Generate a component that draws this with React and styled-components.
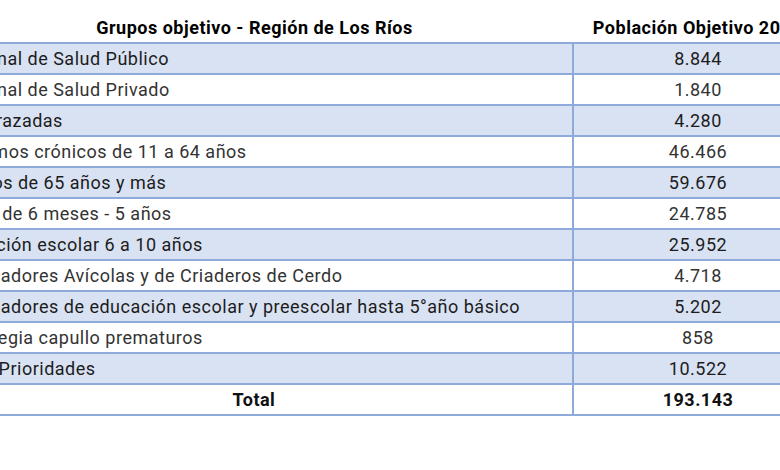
import React from "react";
import styled, { createGlobalStyle } from "styled-components";

const Global = createGlobalStyle`
  html, body { margin: 0; padding: 0; background: #fff; }
  body { font-family: Roboto, "Liberation Sans", sans-serif; }
`;

const Viewport = styled.div`
  width: 780px;
  height: 470px;
  overflow: hidden;
  background: #fff;
  padding-top: 13px;
  box-sizing: border-box;
`;

const Table = styled.table`
  border-collapse: collapse;
  margin-left: -64px;
  table-layout: fixed;
  width: 886px;
  font-family: Roboto, "Liberation Sans", sans-serif;
  letter-spacing: 0.5px;
`;

const HeadCell = styled.th`
  font-size: 18px;
  font-weight: 700;
  color: #000;
  text-align: center;
  height: 29px;
  padding: 0 6px;
  border-bottom: 2px solid #8eaadb;
  background: #fff;
  white-space: nowrap;
`;

const Row = styled.tr`
  background: ${(p) => (p.$band ? "#d9e2f3" : "#fff")};
  color: ${(p) => (p.$band ? "#1c1c1c" : "#333")};
`;

const Cell = styled.td`
  font-size: 18px;
  font-weight: ${(p) => (p.$bold ? 700 : 400)};
  text-align: ${(p) => p.$align || "left"};
  height: 29px;
  padding: 0 0 0 ${(p) => (p.$align === "center" ? "0" : "12px")};
  border-bottom: 2px solid #8eaadb;
  border-right: ${(p) => (p.$divider ? "2px solid #8eaadb" : "none")};
  white-space: nowrap;
  color: ${(p) => (p.$bold ? "#111" : "inherit")};
`;

const rows = [
  ["Personal de Salud Público", "8.844"],
  ["Personal de Salud Privado", "1.840"],
  ["Embarazadas", "4.280"],
  ["Enfermos crónicos de 11 a 64 años", "46.466"],
  ["Adultos de 65 años y más", "59.676"],
  ["Niños de 6 meses - 5 años", "24.785"],
  ["Población escolar 6 a 10 años", "25.952"],
  ["Trabajadores Avícolas y de Criaderos de Cerdo", "4.718"],
  ["Trabajadores de educación escolar y preescolar hasta 5°año básico", "5.202"],
  ["Estrategia capullo prematuros", "858"],
  ["Otras Prioridades", "10.522"],
];

export default function App() {
  return (
    <Viewport>
      <Global />
      <Table>
        <colgroup>
          <col style={{ width: 637 }} />
          <col style={{ width: 249 }} />
        </colgroup>
        <thead>
          <tr>
            <HeadCell>Grupos objetivo - Región de Los Ríos</HeadCell>
            <HeadCell>Población Objetivo 2024</HeadCell>
          </tr>
        </thead>
        <tbody>
          {rows.map(([label, value], i) => (
            <Row key={label} $band={i % 2 === 0}>
              <Cell $divider>{label}</Cell>
              <Cell $align="center">{value}</Cell>
            </Row>
          ))}
          <Row>
            <Cell $divider $align="center" $bold>Total</Cell>
            <Cell $align="center" $bold>193.143</Cell>
          </Row>
        </tbody>
      </Table>
    </Viewport>
  );
}
